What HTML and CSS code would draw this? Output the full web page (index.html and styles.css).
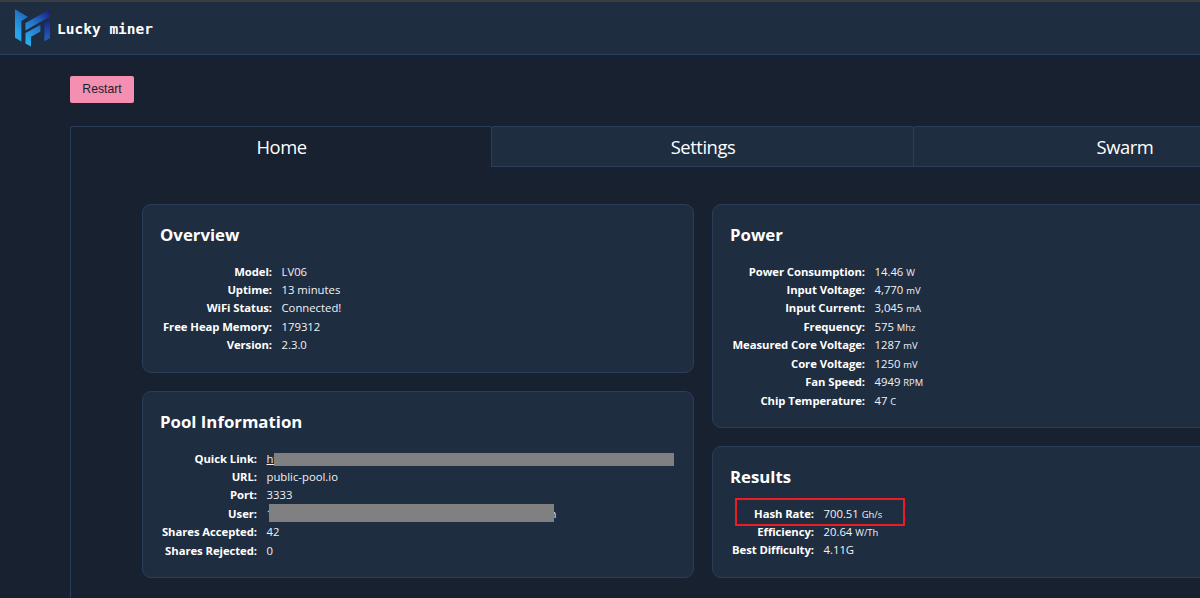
FILE: index.html
```html
<!DOCTYPE html>
<html lang="en">
<head>
<meta charset="utf-8">
<title>Lucky miner</title>
<link rel="stylesheet" href="styles.css">
</head>
<body>
<header class="topbar">
  <svg class="logo" width="36" height="38" viewBox="0 0 36 38">
    <defs>
      <linearGradient id="ga" gradientUnits="userSpaceOnUse" x1="0" y1="20" x2="14" y2="4"><stop offset="0" stop-color="#27a3e8"/><stop offset="1" stop-color="#1f5fb4"/></linearGradient>
      <linearGradient id="gb" gradientUnits="userSpaceOnUse" x1="10" y1="32" x2="35" y2="4"><stop offset="0" stop-color="#2bb0ee"/><stop offset=".55" stop-color="#2370c8"/><stop offset="1" stop-color="#1b2089"/></linearGradient>
      <linearGradient id="gc" gradientUnits="userSpaceOnUse" x1="32" y1="12" x2="32" y2="33"><stop offset="0" stop-color="#1b2491"/><stop offset="1" stop-color="#2168be"/></linearGradient>
    </defs>
    <path fill="url(#ga)" d="M0 .2L13 7.9L6.4 12V32.6L0 28.8Z"/>
    <path fill="url(#gb)" d="M10.5 14L35 .2V7.5L15.5 18.4L10.5 21.6Z"/>
    <path fill="url(#gb)" d="M10.5 24L25.4 16V22.4L16 27.7V37.5L10.5 34.4Z"/>
    <path fill="url(#gc)" d="M29.4 14.2L35 11V29L29.4 32.2Z"/>
  </svg>
  <span class="brand">Lucky miner</span>
</header>
<main class="page">
  <button class="restart">Restart</button>
  <section class="tabs">
    <nav class="tablist">
      <a class="tab active">Home</a>
      <a class="tab">Settings</a>
      <a class="tab">Swarm</a>
    </nav>
    <div class="panel">
      <div class="column">
        <article class="card overview">
          <h2>Overview</h2>
          <dl>
            <dt>Model:</dt><dd>LV06</dd>
            <dt>Uptime:</dt><dd>13 minutes</dd>
            <dt>WiFi Status:</dt><dd>Connected!</dd>
            <dt>Free Heap Memory:</dt><dd>179312</dd>
            <dt>Version:</dt><dd>2.3.0</dd>
          </dl>
        </article>
        <article class="card pool">
          <h2>Pool Information</h2>
          <dl>
            <dt>Quick Link:</dt><dd class="masked"><a class="link">ht</a><span class="mask mask-link"></span></dd>
            <dt>URL:</dt><dd>public-pool.io</dd>
            <dt>Port:</dt><dd>3333</dd>
            <dt>User:</dt><dd class="masked"><span class="user-start">1</span><span class="user-end">n</span><span class="mask mask-user"></span></dd>
            <dt>Shares Accepted:</dt><dd>42</dd>
            <dt>Shares Rejected:</dt><dd>0</dd>
          </dl>
        </article>
      </div>
      <div class="column">
        <article class="card power">
          <h2>Power</h2>
          <dl>
            <dt>Power Consumption:</dt><dd>14.46 <small>W</small></dd>
            <dt>Input Voltage:</dt><dd>4,770 <small>mV</small></dd>
            <dt>Input Current:</dt><dd>3,045 <small>mA</small></dd>
            <dt>Frequency:</dt><dd>575 <small>Mhz</small></dd>
            <dt>Measured Core Voltage:</dt><dd>1287 <small>mV</small></dd>
            <dt>Core Voltage:</dt><dd>1250 <small>mV</small></dd>
            <dt>Fan Speed:</dt><dd>4949 <small>RPM</small></dd>
            <dt>Chip Temperature:</dt><dd>47 <small>C</small></dd>
          </dl>
        </article>
        <article class="card results">
          <h2>Results</h2>
          <dl>
            <dt>Hash Rate:</dt><dd>700.51 <small>Gh/s</small></dd>
            <dt>Efficiency:</dt><dd>20.64 <small>W/Th</small></dd>
            <dt>Best Difficulty:</dt><dd>4.11G</dd>
          </dl>
          <span class="highlight"></span>
        </article>
      </div>
    </div>
  </section>
</main>
</body>
</html>
```
FILE: styles.css
```css
* { box-sizing: border-box; }
body {
  margin: 0;
  height: 598px;
  overflow: hidden;
  background: #17212f;
  color: #fff;
  font-family: "Open Sans", "Noto Sans", sans-serif;
  font-size: 11.3px;
}
.topbar {
  display: flex;
  align-items: flex-start;
  height: 55px;
  padding: 7px 15px 0;
  gap: 6px;
  background: #1f2d40;
  border-top: 2px solid #3c3d40;
  border-bottom: 1px solid #2a4060;
}
.logo { flex: none; }
.brand {
  font: bold 14.5px/20px "DejaVu Sans Mono", monospace;
  padding-top: 10px;
  white-space: pre;
}
.page {
  width: 1130px;
  margin-left: 70px;
  padding-top: 21px;
  overflow: hidden;
}
.restart {
  display: block;
  width: 64px;
  height: 27px;
  padding: 0 0 2px;
  border: 0;
  border-radius: 2px;
  background: #f48fb1;
  color: #17212f;
  font: 12.2px "Liberation Sans", Arial, sans-serif;
}
.tabs { width: 1266px; margin-top: 23px; }
.tablist {
  display: grid;
  grid-template-columns: 422px 422px 422px;
  grid-template-rows: 41px;
  height: 41px;
}
.tab {
  height: 41px;
  border: 1px solid #2a3d59;
  border-right-width: 0;
  border-radius: 3px 3px 0 0;
  background: #1f2d40;
  font-size: 18.4px;
  letter-spacing: -.45px;
  line-height: 40px;
  text-align: center;
}
.tab:not(.active) { margin-left: -1px; }
.tab.active {
  border-bottom: 0;
  background: #17212f;
}
.panel {
  display: flex;
  gap: 18px;
  height: 440px;
  padding: 37px 0 0 71px;
  border-left: 1px solid #2a3d59;
}
.column {
  display: flex;
  flex-direction: column;
  flex: none;
  width: 552px;
  gap: 18px;
}
.card {
  position: relative;
  padding: 17px 17px 0;
  border: 1px solid #2a3d59;
  border-radius: 9px;
  background: #1f2d40;
}
.overview { height: 169px; --label: 112px; }
.pool { height: 187px; --label: 97px; }
.power { height: 224px; --label: 135px; }
.results { height: 132px; --label: 84px; }
h2 {
  margin: 0;
  font-size: 16.8px;
  line-height: 26px;
  font-weight: 700;
}
dl {
  display: grid;
  grid-template-columns: var(--label) 1fr;
  grid-auto-rows: 18.45px;
  column-gap: 9.5px;
  margin: 14.5px 0 0;
  line-height: 18.45px;
  white-space: nowrap;
}
dt { font-weight: 700; text-align: right; justify-self: end; letter-spacing: -.06px; }
dd { margin: 0; color: #f0f2f5; }
small { font-size: 9.4px; }
.masked { position: relative; }
.link { text-decoration: underline; }
.mask { position: absolute; background: #808080; }
.mask-link { left: 7px; top: 3px; width: 400px; height: 13px; }
.mask-user { left: 2px; top: -1px; width: 285px; height: 18px; }
.user-end { position: absolute; left: 283px; top: 0; }
.highlight {
  position: absolute;
  left: 22px;
  top: 51px;
  width: 170px;
  height: 28px;
  border: 2px solid #ed1c24;
}
```
